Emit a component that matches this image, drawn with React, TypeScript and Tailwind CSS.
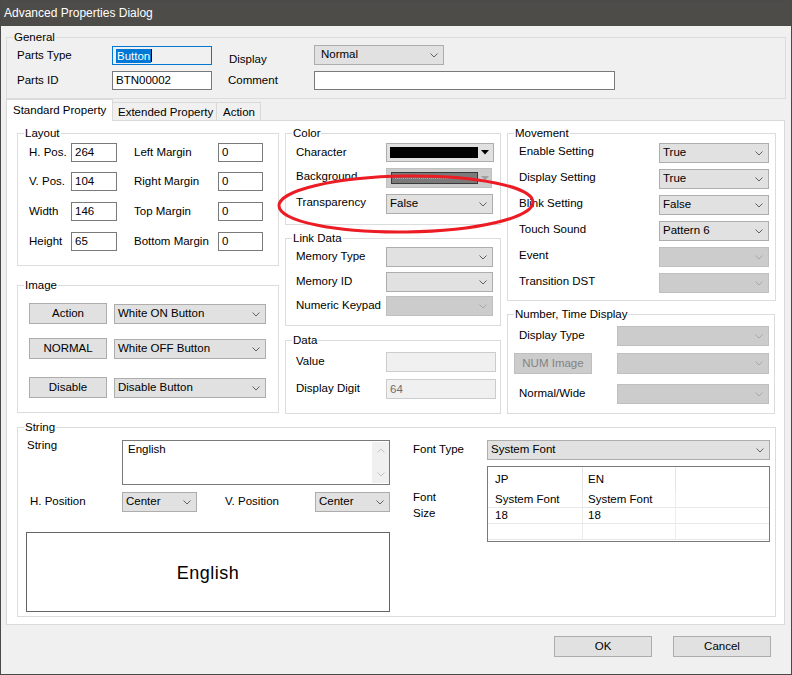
import React from 'react';

const Chevron = ({ up = false, color = '#606060' }: { up?: boolean; color?: string }) => (
  <svg width="8" height="5" viewBox="0 0 8 5" className="shrink-0">
    <polyline points={up ? '0.5,4.5 4,1 7.5,4.5' : '0.5,0.5 4,4 7.5,0.5'} fill="none" stroke={color} strokeWidth="1" />
  </svg>
);

const Triangle = ({ color = '#000' }: { color?: string }) => (
  <svg width="8" height="5" viewBox="0 0 8 5" className="shrink-0">
    <polygon points="0,0 8,0 4,4.5" fill={color} />
  </svg>
);

const Combo = ({ className = '', value = '', disabled = false }: { className?: string; value?: string; disabled?: boolean }) => (
  <div
    className={`flex items-center justify-between pl-[3px] pr-[5px] border ${
      disabled ? 'bg-[#cccccc] border-[#bfbfbf]' : 'bg-[#e1e1e1] border-[#adadad]'
    } ${className}`}
  >
    <span className="whitespace-nowrap leading-none">{value}</span>
    <Chevron color={disabled ? '#a8a8a8' : '#606060'} />
  </div>
);

const Field = ({ className = '', value = '' }: { className?: string; value?: string }) => (
  <div className={`flex items-center pl-[3px] bg-white border border-[#7a7a7a] ${className}`}>
    <span className="leading-none whitespace-nowrap">{value}</span>
  </div>
);

const Btn = ({ className = '', label, disabled = false }: { className?: string; label: string; disabled?: boolean }) => (
  <div
    className={`flex items-center justify-center border ${
      disabled ? 'bg-[#cccccc] border-[#bfbfbf] text-[#838383]' : 'bg-[#e1e1e1] border-[#adadad]'
    } ${className}`}
  >
    {label}
  </div>
);

const Group = ({ title, className = '', bg = 'bg-white', children }: { title: string; className?: string; bg?: string; children?: React.ReactNode }) => (
  <div className={`relative shrink-0 border border-[#dcdcdc] ${className}`}>
    <span className={`absolute -top-[8px] left-[6px] px-[1px] leading-[14px] whitespace-nowrap ${bg}`}>{title}</span>
    {children}
  </div>
);

const layoutRows = [
  ['H. Pos.', '264', 'Left Margin', '0', 'mt-[9px]'],
  ['V. Pos.', '104', 'Right Margin', '0', 'mt-[10px]'],
  ['Width', '146', 'Top Margin', '0', 'mt-[11px]'],
  ['Height', '65', 'Bottom Margin', '0', 'mt-[11px]'],
];

const imageRows = [
  ['Action', 'White ON Button', 'mt-[17px]'],
  ['NORMAL', 'White OFF Button', 'mt-[14px]'],
  ['Disable', 'Disable Button', 'mt-[18px]'],
];

const movementRows: [string, string, boolean][] = [
  ['Enable Setting', 'True', false],
  ['Display Setting', 'True', false],
  ['Blink Setting', 'False', false],
  ['Touch Sound', 'Pattern 6', false],
  ['Event', '', true],
  ['Transition DST', '', true],
];

export default function App() {
  return (
    <div className="relative w-[792px] h-[675px] bg-[#f0f0f0] border border-[#4a4a4a] flex flex-col text-[11.5px] text-black font-['Liberation_Sans',Arial,sans-serif]">
      {/* Title bar */}
      <div className="h-[25px] shrink-0 bg-[#4e4c49] text-white text-[12px] pl-[3px] leading-[25px]">Advanced Properties Dialog</div>

      {/* General */}
      <Group title="General" bg="bg-[#f0f0f0]" className="ml-[5px] mt-[11px] w-[780px] h-[62px]">
        <div className="flex items-start h-[20px] mt-[7px] pl-[10px]">
          <span className="w-[95px] leading-[20px]">Parts Type</span>
          <div className="mt-[1px] w-[100px] h-[19px] border border-[#0078d7] bg-[#f0f0f0] flex items-center pl-[3px]">
            <span className="bg-[#0078d7] text-white leading-[14px] px-[1px]">Button</span>
            <span className="w-px h-[13px] bg-black" />
          </div>
          <span className="ml-[17px] w-[85px] mt-[4px] leading-[20px]">Display</span>
          <Combo className="w-[130px] h-[20px] pl-[6px]" value="Normal" />
        </div>
        <div className="flex items-start h-[19px] mt-[6px] pl-[10px]">
          <span className="w-[95px] leading-[19px]">Parts ID</span>
          <Field className="w-[100px] h-[19px]" value="BTN00002" />
          <span className="ml-[16px] w-[86px] leading-[19px]">Comment</span>
          <Field className="w-[301px] h-[19px]" />
        </div>
      </Group>

      {/* Tabs */}
      <div className="flex items-end h-[22px] ml-[5px] -mb-px whitespace-nowrap">
        <div className="relative z-10 w-[107px] h-[22px] bg-white border-l border-r border-t border-[#d9d9d9] pl-[6px] leading-[20px]">Standard Property</div>
        <div className="w-[104px] h-[19px] bg-[#f0f0f0] border-t border-r border-[#d9d9d9] pl-[5px] leading-[18px]">Extended Property</div>
        <div className="w-[44px] h-[19px] bg-[#f0f0f0] border-t border-r border-[#d9d9d9] pl-[6px] leading-[18px]">Action</div>
      </div>

      {/* Tab panel */}
      <div className="ml-[5px] w-[779px] h-[505px] shrink-0 bg-white border border-[#d9d9d9] flex flex-col">
        <div className="flex items-start mt-[12px] pl-[10px]">
          {/* Left column */}
          <div className="flex flex-col">
            <Group title="Layout" className="w-[262px] h-[133px]">
              {layoutRows.map(([a, av, b, bv, mt]) => (
                <div key={a} className={`flex h-[19px] pl-[11px] ${mt}`}>
                  <span className="w-[42px] leading-[19px] whitespace-nowrap">{a}</span>
                  <Field className="w-[46px] h-[19px]" value={av} />
                  <span className="ml-[17px] w-[84px] leading-[19px] whitespace-nowrap">{b}</span>
                  <Field className="w-[45px] h-[19px]" value={bv} />
                </div>
              ))}
            </Group>
            <Group title="Image" className="mt-[19px] w-[262px] h-[128px]">
              {imageRows.map(([b, v, mt]) => (
                <div key={b} className={`flex items-start pl-[11px] ${mt}`}>
                  <Btn className="w-[78px] h-[21px]" label={b} />
                  <Combo className="ml-[7px] mt-[1px] w-[152px] h-[20px]" value={v} />
                </div>
              ))}
            </Group>
          </div>

          {/* Middle column */}
          <div className="flex flex-col ml-[6px]">
            <Group title="Color" className="w-[216px] h-[92px]">
              <div className="flex mt-[9px] pl-[10px]">
                <span className="w-[90px] leading-[19px]">Character</span>
                <div className="w-[108px] h-[19px] bg-[#e1e1e1] border border-[#adadad] flex items-center pl-[3px] gap-[3px]">
                  <div className="w-[88px] h-[11px] bg-black" />
                  <Triangle />
                </div>
              </div>
              <div className="flex mt-[6px] pl-[10px]">
                <span className="w-[90px] leading-[16px]">Background</span>
                <div className="w-[106px] h-[20px] bg-[#cccccc] border border-[#bfbfbf] flex items-center pl-[4px] gap-[3px]">
                  <div className="w-[87px] h-[12px] bg-[#7a7a7a] border border-[#3a3a3a] flex items-center px-[3px]">
                    <div className="w-full border-t border-dotted border-[#a8a8a8]" />
                  </div>
                  <Triangle color="#a0a0a0" />
                </div>
              </div>
              <div className="flex mt-[6px] pl-[10px]">
                <span className="w-[90px] leading-[17px]">Transparency</span>
                <Combo className="w-[107px] h-[20px]" value="False" />
              </div>
            </Group>
            <Group title="Link Data" className="mt-[13px] w-[216px] h-[88px]">
              <div className="flex mt-[8px] pl-[10px]">
                <span className="w-[90px] leading-[18px]">Memory Type</span>
                <Combo className="w-[107px] h-[20px]" />
              </div>
              <div className="flex mt-[5px] pl-[10px]">
                <span className="w-[90px] leading-[18px]">Memory ID</span>
                <Combo className="w-[107px] h-[20px]" />
              </div>
              <div className="flex mt-[4px] pl-[10px]">
                <span className="w-[90px] leading-[18px] whitespace-nowrap">Numeric Keypad</span>
                <Combo className="w-[107px] h-[20px]" disabled />
              </div>
            </Group>
            <Group title="Data" className="mt-[14px] w-[216px] h-[74px]">
              <div className="flex mt-[11px] pl-[10px]">
                <span className="w-[90px] leading-[18px]">Value</span>
                <div className="w-[110px] h-[20px] bg-[#f0f0f0] border border-[#cccccc]" />
              </div>
              <div className="flex mt-[7px] pl-[10px]">
                <span className="w-[90px] leading-[19px]">Display Digit</span>
                <div className="w-[110px] h-[20px] bg-[#f0f0f0] border border-[#cccccc] pl-[3px] leading-[18px] text-[#6d6d6d]">64</div>
              </div>
            </Group>
          </div>

          {/* Right column */}
          <div className="flex flex-col ml-[6px]">
            <Group title="Movement" className="w-[269px] h-[168px]">
              <div className="flex flex-col gap-[6px] mt-[9px] pl-[11px]">
                {movementRows.map(([l, v, d]) => (
                  <div key={l} className="flex">
                    <span className="w-[140px] leading-[17px]">{l}</span>
                    <Combo className="w-[110px] h-[20px]" value={v} disabled={d} />
                  </div>
                ))}
              </div>
            </Group>
            <Group title="Number, Time Display" className="mt-[13px] w-[268px] h-[100px]">
              <div className="flex mt-[11px] pl-[11px]">
                <span className="w-[98px] leading-[18px]">Display Type</span>
                <Combo className="w-[152px] h-[20px]" disabled />
              </div>
              <div className="flex mt-[7px] pl-[6px]">
                <Btn className="w-[78px] h-[21px]" label="NUM Image" disabled />
                <Combo className="ml-[25px] w-[152px] h-[21px]" disabled />
              </div>
              <div className="flex mt-[10px] pl-[11px]">
                <span className="w-[98px] leading-[19px]">Normal/Wide</span>
                <Combo className="w-[152px] h-[20px]" disabled />
              </div>
            </Group>
          </div>
        </div>

        {/* String */}
        <Group title="String" className="ml-[10px] mt-[13px] w-[759px] h-[190px]">
          <div className="flex items-start mt-[12px]">
            <div className="flex flex-col w-[372px]">
              <div className="flex pl-[9px]">
                <span className="w-[95px] leading-[14px] -mt-[2px]">String</span>
                <div className="w-[268px] h-[45px] border border-[#7a7a7a] bg-white flex">
                  <div className="flex-1 pl-[5px] pt-[1px] leading-[14px]">English</div>
                  <div className="w-[17px] my-[1px] bg-[#f0f0f0] flex flex-col items-center justify-between py-[6px]">
                    <Chevron up color="#c4c4c4" />
                    <Chevron color="#c4c4c4" />
                  </div>
                </div>
              </div>
              <div className="flex mt-[7px] pl-[12px]">
                <span className="w-[92px] leading-[18px]">H. Position</span>
                <Combo className="w-[75px] h-[20px]" value="Center" />
                <span className="ml-[28px] w-[90px] leading-[18px]">V. Position</span>
                <Combo className="w-[75px] h-[20px]" value="Center" />
              </div>
              <div className="ml-[8px] mt-[20px] w-[364px] h-[80px] border border-[#646464] bg-white flex items-center justify-center pt-[3px]">
                <span className="text-[18px] tracking-[0.5px]">English</span>
              </div>
            </div>
            <div className="flex flex-col ml-[23px]">
              <div className="flex">
                <span className="w-[74px] leading-[18px]">Font Type</span>
                <Combo className="w-[283px] h-[20px]" value="System Font" />
              </div>
              <div className="flex mt-[6px]">
                <div className="w-[74px] flex flex-col pt-[23px] leading-[16px]">
                  <span>Font</span>
                  <span>Size</span>
                </div>
                <div className="w-[283px] h-[76px] border border-[#7a7a7a] bg-white">
                  <div className="flex h-[25px]">
                    <div className="w-[95px] border-r border-[#e5e5e5] pl-[7px] leading-[25px]">JP</div>
                    <div className="w-[93px] border-r border-[#e5e5e5] pl-[5px] leading-[25px]">EN</div>
                    <div className="flex-1" />
                  </div>
                  {[['System Font', 'System Font'], ['18', '18'], ['', '']].map(([a, b], i) => (
                    <div key={i} className="flex h-[16px] border-b border-[#e8e8e8]">
                      <div className="w-[95px] border-r border-[#ececec] pl-[7px] leading-[15px]">{a}</div>
                      <div className="w-[93px] border-r border-[#ececec] pl-[5px] leading-[15px]">{b}</div>
                      <div className="flex-1" />
                    </div>
                  ))}
                </div>
              </div>
            </div>
          </div>
        </Group>
      </div>

      {/* Buttons */}
      <div className="flex justify-end gap-[21px] mt-[11px] pr-[20px]">
        <Btn className="w-[98px] h-[21px]" label="OK" />
        <Btn className="w-[98px] h-[21px]" label="Cancel" />
      </div>

      {/* Red annotation ellipse */}
      <svg className="absolute -top-px -left-px pointer-events-none" width="792" height="675" viewBox="0 0 792 675">
        <ellipse cx="406" cy="204" rx="127" ry="28" fill="none" stroke="#ec1c24" strokeWidth="3" transform="rotate(-0.8 406 204)" />
      </svg>
    </div>
  );
}
